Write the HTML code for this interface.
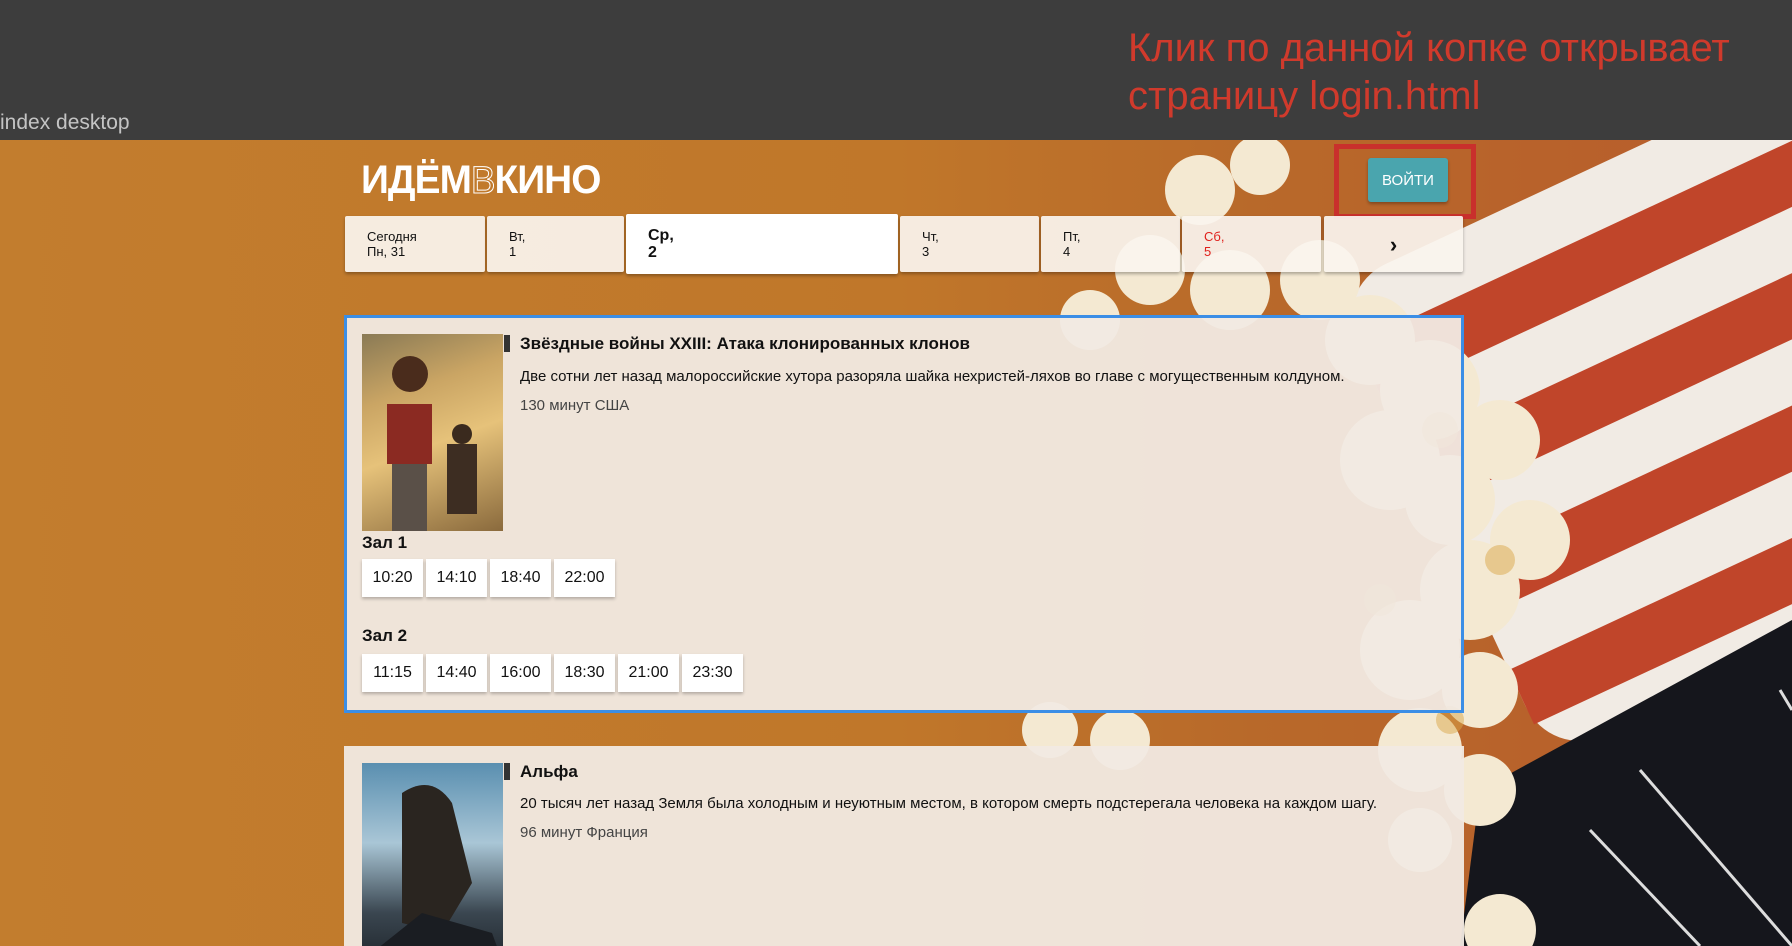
<!DOCTYPE html>
<html style="overflow:hidden;width:1792px;height:946px"><head><meta charset="utf-8"><style>
*{margin:0;padding:0;box-sizing:border-box}
body{width:1792px;height:946px;overflow:hidden;background:#3d3d3d;font-family:"Liberation Sans","DejaVu Sans",sans-serif;position:relative}
.top{position:absolute;left:0;top:0;width:1792px;height:140px;background:#3d3d3d}
.idx{position:absolute;left:0;top:111px;color:#c4c4c4;font-size:21px}
.note{position:absolute;left:1128px;top:24px;color:#d03a2c;font-size:40px;line-height:48px}
.bg{position:absolute;left:0;top:140px;width:1792px;height:806px;overflow:hidden;background:linear-gradient(90deg,#c27d2e 0%,#c0772a 50%,#b8692a 70%,#b85c2c 100%)}
.logo{position:absolute;left:361px;top:158px;color:#fff;font-size:40px;font-weight:bold;letter-spacing:-1px;transform:scaleX(.97);transform-origin:left;white-space:nowrap}
.logo span{font-weight:normal;font-size:38px;color:transparent;-webkit-text-stroke:1px #fff}
.redbox{position:absolute;left:1334px;top:144px;width:142px;height:75px;border:5px solid #c9302c}
.btn{position:absolute;left:1368px;top:158px;width:80px;height:44px;background:#4aa5ae;color:#fff;font-size:15px;display:flex;align-items:center;justify-content:center;border-radius:3px;box-shadow:0 2px 3px rgba(0,0,0,.3)}
.day{position:absolute;top:216px;height:56px;background:rgba(250,244,238,.93);border-radius:2px;box-shadow:0 2px 3px rgba(0,0,0,.3);font-size:13px;line-height:15px;padding:13px 0 0 22px;color:#111}
.day.sel{top:214px;height:60px;background:#fff;font-weight:bold;font-size:16px;line-height:17px;padding-top:13px}
.card{position:absolute;left:344px;width:1120px;background:rgba(241,234,227,.95)}
.c1{top:315px;height:398px;border:3px solid #3b8ee6}
.c2{top:746px;height:200px}
.poster{position:absolute;width:141px;height:197px}
.bar{position:absolute;width:6px;height:17px;background:#333}
.title{position:absolute;font-size:17px;font-weight:bold;color:#111}
.desc{position:absolute;font-size:15px;color:#111}
.meta{position:absolute;font-size:15px;color:#444}
.hall{position:absolute;font-size:17px;font-weight:bold;color:#111}
.t{position:absolute;width:61px;height:38px;background:#fff;box-shadow:0 2px 3px rgba(0,0,0,.25);font-size:16px;display:flex;align-items:center;justify-content:center;color:#111}
</style></head><body>
<div class="top"></div>
<div class="idx">index desktop</div>
<div class="note">Клик по данной копке открывает<br>страницу login.html</div>
<div class="bg">
<svg width="1792" height="806" viewBox="0 140 1792 806">
<g transform="translate(130 0) rotate(-25 1560 420)">
<rect x="1290" y="150" width="620" height="520" rx="60" fill="#f1ebe4"/>
<rect x="1290" y="210" width="620" height="60" fill="#c0452a"/>
<rect x="1290" y="330" width="620" height="60" fill="#c0452a"/>
<rect x="1290" y="450" width="620" height="60" fill="#c0452a"/>
<rect x="1290" y="570" width="620" height="60" fill="#c0452a"/>
</g>
<polygon points="1460,946 1480,790 1792,620 1792,946" fill="#15161c"/>
<line x1="1640" y1="770" x2="1792" y2="946" stroke="#ddd" stroke-width="3"/>
<line x1="1590" y1="830" x2="1700" y2="946" stroke="#ddd" stroke-width="3"/>
<line x1="1780" y1="690" x2="1792" y2="710" stroke="#ddd" stroke-width="3"/>
<g fill="#f4e9d2">
<circle cx="1200" cy="190" r="35"/><circle cx="1260" cy="165" r="30"/><circle cx="1150" cy="270" r="35"/>
<circle cx="1230" cy="290" r="40"/><circle cx="1320" cy="280" r="40"/><circle cx="1370" cy="340" r="45"/>
<circle cx="1430" cy="390" r="50"/><circle cx="1390" cy="460" r="50"/><circle cx="1450" cy="500" r="45"/>
<circle cx="1500" cy="440" r="40"/><circle cx="1530" cy="540" r="40"/><circle cx="1470" cy="590" r="50"/>
<circle cx="1410" cy="650" r="50"/><circle cx="1480" cy="690" r="38"/><circle cx="1420" cy="750" r="42"/>
<circle cx="1480" cy="790" r="36"/><circle cx="1420" cy="840" r="32"/><circle cx="1500" cy="930" r="36"/>
<circle cx="1090" cy="320" r="30"/><circle cx="1050" cy="730" r="28"/><circle cx="1120" cy="740" r="30"/>
</g>
<g fill="#d9a84a" opacity=".5">
<circle cx="1440" cy="430" r="18"/><circle cx="1500" cy="560" r="15"/><circle cx="1380" cy="600" r="16"/><circle cx="1450" cy="720" r="14"/>
</g>
</svg>
</div>
<div class="logo">ИДЁМ<span>В</span>КИНО</div>
<div class="redbox"></div>
<div class="btn">ВОЙТИ</div>
<div class="day" style="left:345px;width:140px">Сегодня<br>Пн, 31</div>
<div class="day" style="left:487px;width:137px">Вт,<br>1</div>
<div class="day sel" style="left:626px;width:272px">Ср,<br>2</div>
<div class="day" style="left:900px;width:139px">Чт,<br>3</div>
<div class="day" style="left:1041px;width:139px">Пт,<br>4</div>
<div class="day" style="left:1182px;width:139px;color:#e0201b">Сб,<br>5</div>
<div class="day" style="left:1324px;width:139px;padding:0;display:flex;align-items:center;justify-content:center;font-size:22px;font-weight:bold">›</div>

<div class="card c1">
<div class="poster" style="left:15px;top:16px;background:linear-gradient(160deg,#8a7a55 0%,#caa564 30%,#e6c27a 55%,#8a6a3d 100%)">
<svg width="141" height="197"><rect x="25" y="70" width="45" height="60" fill="#8b2a22"/><circle cx="48" cy="40" r="18" fill="#4a2c1c"/><rect x="30" y="130" width="35" height="67" fill="#5a5048"/><rect x="85" y="110" width="30" height="70" fill="#3d2d22"/><circle cx="100" cy="100" r="10" fill="#3a2a1e"/></svg>
</div>
<div class="bar" style="left:157px;top:17px"></div>
<div class="title" style="left:173px;top:16px">Звёздные войны XXIII: Атака клонированных клонов</div>
<div class="desc" style="left:173px;top:50px">Две сотни лет назад малороссийские хутора разоряла шайка нехристей-ляхов во главе с могущественным колдуном.</div>
<div class="meta" style="left:173px;top:79px">130 минут США</div>
<div class="hall" style="left:15px;top:215px">Зал 1</div>
<div class="t" style="left:15px;top:241px">10:20</div>
<div class="t" style="left:79px;top:241px">14:10</div>
<div class="t" style="left:143px;top:241px">18:40</div>
<div class="t" style="left:207px;top:241px">22:00</div>
<div class="hall" style="left:15px;top:308px">Зал 2</div>
<div class="t" style="left:15px;top:336px">11:15</div>
<div class="t" style="left:79px;top:336px">14:40</div>
<div class="t" style="left:143px;top:336px">16:00</div>
<div class="t" style="left:207px;top:336px">18:30</div>
<div class="t" style="left:271px;top:336px">21:00</div>
<div class="t" style="left:335px;top:336px">23:30</div>
</div>

<div class="card c2">
<div class="poster" style="left:18px;top:17px;height:200px;background:linear-gradient(180deg,#5a8fb0 0%,#a9c6d6 40%,#3a4650 75%,#20262c 100%)">
<svg width="141" height="200"><path d="M40 30 Q70 10 90 40 L110 120 L80 170 L40 160 Z" fill="#2a2520"/><path d="M10 190 L60 150 L130 170 L141 200 L10 200Z" fill="#1a1d22"/></svg>
</div>
<div class="bar" style="left:160px;top:17px"></div>
<div class="title" style="left:176px;top:16px">Альфа</div>
<div class="desc" style="left:176px;top:49px">20 тысяч лет назад Земля была холодным и неуютным местом, в котором смерть подстерегала человека на каждом шагу.</div>
<div class="meta" style="left:176px;top:78px">96 минут Франция</div>
</div>
</body></html>
